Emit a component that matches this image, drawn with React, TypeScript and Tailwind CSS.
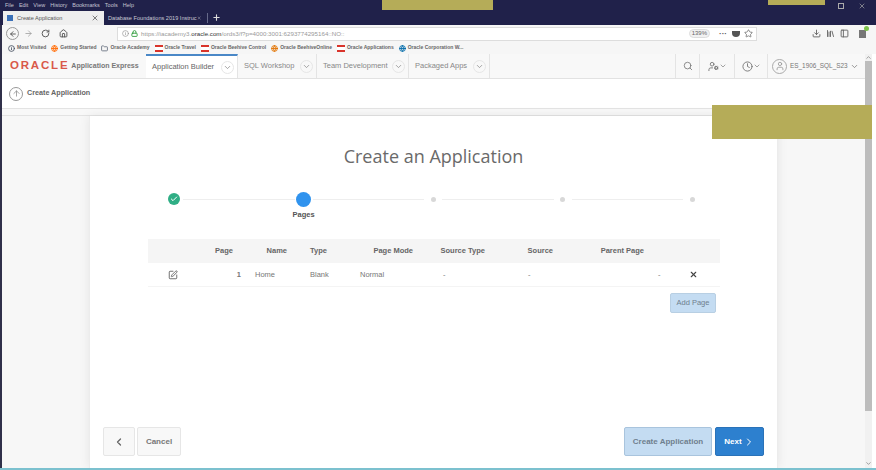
import React from 'react';
import {
  ArrowLeft, ArrowRight, RotateCw, Home, ChevronDown, ChevronLeft, ChevronRight, Search, UserCog, Clock,
  User, Check, SquarePen, X, Plus, Lock, Star, Download, Library, PanelLeft, Folder, Globe, ArrowUp, Info,
} from 'lucide-react';

const bookmarks = [
  { label: 'Most Visited', color: 'text-gray-600', Icon: Info },
  { label: 'Getting Started', color: 'text-orange-500', Icon: Globe },
  { label: 'Oracle Academy', color: 'text-gray-500', Icon: Folder },
  { label: 'Oracle Travel', red: true },
  { label: 'Oracle Beehive Control', red: true },
  { label: 'Oracle BeehiveOnline', color: 'text-amber-600', Icon: Globe },
  { label: 'Oracle Applications', red: true },
  { label: 'Oracle Corporation W...', color: 'text-sky-700', Icon: Globe },
];

const navTabs = [
  { label: 'Application Builder', width: 'w-[92px]', active: true },
  { label: 'SQL Workshop', width: 'w-[79px]', active: false },
  { label: 'Team Development', width: 'w-[92px]', active: false },
  { label: 'Packaged Apps', width: 'w-[81px]', active: false },
];

const Patch = ({ className }: { className: string }) => (
  <div className={`absolute bg-[#b5ac58] bg-[radial-gradient(#8f8a42_40%,transparent_45%)] bg-[size:2px_2px] ${className}`} />
);

const Step = ({ label, state }: { label?: string; state: 'done' | 'current' | 'todo' }) => (
  <div className="relative flex h-4 w-4 shrink-0 items-center justify-center">
    {state === 'done' && (
      <div className="flex h-3 w-3 items-center justify-center rounded-full bg-[#2fae85]">
        <Check className="h-2 w-2 text-white" strokeWidth={3} />
      </div>
    )}
    {state === 'current' && <div className="h-[15px] w-[15px] rounded-full bg-[#3093ee]" />}
    {state === 'todo' && <div className="h-[5px] w-[5px] rounded-full bg-[#d8d8d8]" />}
    {label && (
      <span className="absolute top-[18px] text-[7.5px] font-bold text-[#555]">{label}</span>
    )}
  </div>
);

const StepLine = () => <div className="h-px flex-1 bg-[#eeeeee]" />;

export default function App() {
  return (
    <div className="relative flex h-[470px] w-[876px] flex-col overflow-hidden bg-white font-['Liberation_Sans',sans-serif] text-[#666]">
      {/* Browser title + tabs */}
      <div className="flex h-[25px] flex-col bg-[#20214a]">
        <div className="flex h-[11px] items-center gap-[5px] pl-[5px] text-[5.5px] text-[#c4c4d2]">
          <span>File</span><span>Edit</span><span>View</span><span>History</span><span>Bookmarks</span><span>Tools</span><span>Help</span>
          <div className="ml-auto flex items-center gap-[14px] pr-[10px]">
            <div className="h-[6px] w-[6px] border border-[#aaa]" />
            <X className="h-2 w-2 text-[#aaa]" />
          </div>
        </div>
        <div className="flex h-[14px] items-stretch pl-[3px]">
          <div className="flex w-[101px] items-center gap-[4px] bg-[#eeeeee] pl-[4px] pr-[5px] text-[5.6px] text-[#555]">
            <div className="h-[6px] w-[6px] bg-[#3a70b8]" />
            <span>Create Application</span>
            <X className="ml-auto h-2 w-2 text-[#444]" />
          </div>
          <div className="flex w-[100px] items-center pl-[4px] pr-[3px] text-[5.6px] text-[#c9c9d6]">
            <span className="whitespace-nowrap">Database Foundations 2019 Instruc</span>
            <X className="ml-auto h-2 w-2 text-[#ddd]" />
          </div>
          <div className="my-[2px] ml-[3px] w-px bg-[#666a8a]" />
          <Plus className="ml-[4px] mt-[2px] h-[9px] w-[9px] text-[#ddd]" strokeWidth={3} />
        </div>
      </div>

      {/* URL toolbar */}
      <div className="flex h-[17px] items-center bg-[#f6f6f6] pl-[6px]">
        <div className="flex h-[13px] w-[13px] items-center justify-center rounded-full border border-[#999]">
          <ArrowLeft className="h-2 w-2 text-[#444]" strokeWidth={2.5} />
        </div>
        <ArrowRight className="ml-[5px] h-[9px] w-[9px] text-[#999]" />
        <RotateCw className="ml-[8px] h-[9px] w-[9px] text-[#555]" strokeWidth={2.5} />
        <Home className="ml-[9px] h-[9px] w-[9px] text-[#555]" strokeWidth={2.5} />
        <div className="ml-[49px] flex h-[14px] w-[640px] items-center border border-[#dddddd] bg-white pl-[4px] pr-[3px]">
          <Info className="h-[7px] w-[7px] text-[#888]" />
          <Lock className="ml-[2px] h-[7px] w-[7px] text-[#2e9c3a]" strokeWidth={3} />
          <span className="ml-[3px] whitespace-nowrap text-[6.2px] text-[#999]">
            https://iacademy3.<span className="text-[#333]">oracle.com</span>/ords3/f?p=4000:3001:6293774295164::NO::
          </span>
          <span className="ml-auto rounded-full border border-[#ddd] bg-[#f1f1f1] px-[2px] text-[6px] leading-[7px] text-[#666]">139%</span>
          <span className="ml-[9px] text-[8px] font-bold leading-none text-[#555]">···</span>
          <div className="ml-[5px] h-[6px] w-2 rounded-b-[4px] bg-[#555]" />
          <Star className="ml-[4px] h-[9px] w-[9px] text-[#666]" />
        </div>
        <div className="ml-[55px] flex items-center gap-[5px] text-[#666]">
          <Download className="h-[9px] w-[9px]" strokeWidth={2.5} />
          <Library className="h-[9px] w-[9px]" strokeWidth={2.5} />
          <PanelLeft className="h-[9px] w-[9px]" strokeWidth={2.5} />
          <div className="relative ml-[5px] h-[8px] w-[7px] bg-[#777]">
            <div className="absolute -right-[3px] -top-[4px] h-[5px] w-[5px] rounded-full bg-[#7dc24b]" />
          </div>
        </div>
      </div>

      {/* Bookmarks */}
      <div className="flex h-[12px] items-center gap-[5px] bg-[#f6f6f6] pl-[8px] text-[5px] font-bold text-[#666]">
        {bookmarks.map(({ label, color, Icon, red }) => (
          <div key={label} className="flex items-center gap-[2px] whitespace-nowrap">
            {red && <div className="h-[7px] w-[8px] border-y-2 border-[#d9342b] bg-white" />}
            {Icon && <Icon className={`h-[7px] w-[7px] ${color}`} strokeWidth={3} />}
            <span>{label}</span>
          </div>
        ))}
      </div>

      <div className="flex min-h-0 flex-1">
        <div className="flex min-w-0 flex-1 flex-col pl-[2px]">
          {/* APEX nav */}
          <div className="flex h-[25px] shrink-0 items-stretch border-b border-[#e2e2e2] bg-[#f8f8f8]">
            <div className="flex w-[144px] items-center whitespace-nowrap pl-[8px]">
              <span className="text-[11.5px] font-bold leading-none tracking-[1.8px] text-[#d9584a]">ORACLE</span>
              <span className="ml-[2px] text-[7px] font-bold text-[#777]">Application Express</span>
            </div>
            {navTabs.map((t) => (
              <div
                key={t.label}
                className={`flex items-center justify-between whitespace-nowrap border-r border-[#e4e4e4] pl-[6px] pr-[3px] text-[7.5px] ${t.width} ${t.active ? 'border-t-2 border-t-[#4a88c7] bg-white' : 'text-[#888]'}`}
              >
                <span>{t.label}</span>
                <div className="flex h-[13px] w-[13px] items-center justify-center rounded-full border border-[#e6e6e6]">
                  <ChevronDown className="h-[9px] w-[9px] text-[#888]" />
                </div>
              </div>
            ))}
            <div className="flex-1 border-r border-[#e4e4e4]" />
            <div className="flex w-[24px] items-center justify-center border-r border-[#e4e4e4]">
              <Search className="h-[10px] w-[10px] text-[#777]" />
            </div>
            <div className="flex w-[35px] items-center justify-center border-r border-[#e4e4e4]">
              <UserCog className="h-[11px] w-[11px] text-[#777]" />
              <ChevronDown className="h-2 w-2 text-[#777]" />
            </div>
            <div className="flex w-[33px] items-center justify-center border-r border-[#e4e4e4]">
              <Clock className="h-[11px] w-[11px] text-[#777]" />
              <ChevronDown className="h-2 w-2 text-[#777]" />
            </div>
            <div className="flex w-[97px] items-center pl-[4px] pr-[6px] text-[6.4px] text-[#777]">
              <div className="flex h-[15px] w-[15px] shrink-0 items-center justify-center rounded-full border border-[#aaa]">
                <User className="h-[10px] w-[10px] text-[#999]" />
              </div>
              <span className="ml-[3px] whitespace-nowrap">ES_1906_SQL_S23</span>
              <ChevronDown className="ml-auto h-[9px] w-[9px]" />
            </div>
          </div>

          {/* Breadcrumb */}
          <div className="flex h-[29px] shrink-0 items-center gap-[4px] bg-white pl-[7px]">
            <div className="flex h-[14px] w-[14px] items-center justify-center rounded-full border border-[#999]">
              <ArrowUp className="h-[9px] w-[9px] text-[#888]" />
            </div>
            <span className="text-[7.2px] font-bold text-[#666]">Create Application</span>
          </div>
          <div className="h-[8px] shrink-0 border-y border-[#e3e3e3] bg-[#f8f8f8]" />

          {/* Wizard */}
          <div className="flex min-h-0 flex-1 bg-[#f7f7f7] pl-[87px]">
            <div className="flex w-[689px] shrink-0 flex-col border-x border-[#ececec] bg-white pb-[12px] pt-[27px] shadow-[0_0_10px_rgba(0,0,0,0.08)]">
              <h1 className="text-center text-[18px] leading-[26px] text-[#6a6a6a] font-['Open_Sans',sans-serif]">Create an Application</h1>
              <div className="ml-[76px] mr-[77px] mt-[22px] flex items-center gap-[1px]">
                <Step state="done" />
                <StepLine />
                <Step state="current" label="Pages" />
                <StepLine />
                <Step state="todo" />
                <StepLine />
                <Step state="todo" />
                <StepLine />
                <Step state="todo" />
              </div>

              {/* Pages table */}
              <div className="ml-[58px] mr-[57px] mt-[32px]">
                <div className="flex h-[24px] items-center bg-[#f5f5f5] text-[7.5px] font-bold text-[#666]">
                  <span className="w-[85px] text-right">Page</span>
                  <span className="w-[54px] text-right">Name</span>
                  <span className="w-[40px] text-right">Type</span>
                  <span className="w-[86px] text-right">Page Mode</span>
                  <span className="w-[72px] text-right">Source Type</span>
                  <span className="w-[68px] text-right">Source</span>
                  <span className="w-[91px] text-right">Parent Page</span>
                </div>
                <div className="flex h-[24px] items-center border-b border-[#f4f4f4] text-[7.5px] text-[#777]">
                  <SquarePen className="ml-[20px] h-[10px] w-[10px] text-[#555]" />
                  <span className="ml-[58px] w-[5px] text-right font-bold">1</span>
                  <span className="ml-[14px] w-[55px]">Home</span>
                  <span className="w-[50px]">Blank</span>
                  <span className="w-[83px]">Normal</span>
                  <span className="w-[85px]">-</span>
                  <span className="w-[130px]">-</span>
                  <span className="w-[31px]">-</span>
                  <X className="h-[9px] w-[9px] text-[#444]" strokeWidth={3} />
                </div>
                <div className="mr-[4px] mt-[6px] flex justify-end">
                  <button className="h-[20px] w-[46px] rounded-[2px] border border-[#b8cfe3] bg-[#c4dcf2] text-[7.5px] text-[#6f7f8e]">Add Page</button>
                </div>
              </div>

              {/* Wizard buttons */}
              <div className="mt-auto flex items-center pl-[13px] pr-[13px]">
                <button className="flex h-[29px] w-[32px] items-center justify-center rounded-[2px] border border-[#e6e6e6] bg-[#f8f8f8]">
                  <ChevronLeft className="h-3 w-3 text-[#666]" strokeWidth={2.5} />
                </button>
                <button className="ml-[2px] h-[29px] w-[44px] rounded-[2px] border border-[#e6e6e6] bg-[#f8f8f8] text-[8px] font-bold text-[#777]">Cancel</button>
                <button className="ml-auto h-[29px] w-[88px] rounded-[2px] border border-[#a9c4dd] bg-[#c4dcf2] text-[8px] font-bold text-[#6f7f8e]">Create Application</button>
                <button className="ml-[3px] flex h-[29px] w-[49px] items-center justify-center gap-[1px] rounded-[2px] border border-[#2a72b8] bg-[#2d80cf] text-[8px] font-bold text-white">
                  Next <ChevronRight className="h-3 w-3" />
                </button>
              </div>
            </div>
          </div>
        </div>

        {/* Page scrollbar */}
        <div className="flex w-[7px] shrink-0 flex-col bg-[#f1f1f1]">
          <ChevronDown className="h-[7px] w-[7px] rotate-180 text-[#666]" />
          <div className="h-[350px] bg-[#bdbdbd]" />
          <ChevronDown className="mb-[1px] mt-auto h-[7px] w-[7px] text-[#666]" />
        </div>
        <div className="w-[4px] shrink-0" />
      </div>
      <div className="h-[2px] bg-[#7cc1cf]" />

      {/* Window edge and redaction patches overlaying the capture */}
      <div className="absolute bottom-[2px] left-0 top-[25px] w-[2px] bg-[#30304a]" />
      <Patch className="left-[382px] top-0 h-[10px] w-[111px]" />
      <Patch className="left-[768px] top-0 h-[5px] w-[57px]" />
      <Patch className="left-[712px] top-[105px] h-[34px] w-[160px]" />
    </div>
  );
}
